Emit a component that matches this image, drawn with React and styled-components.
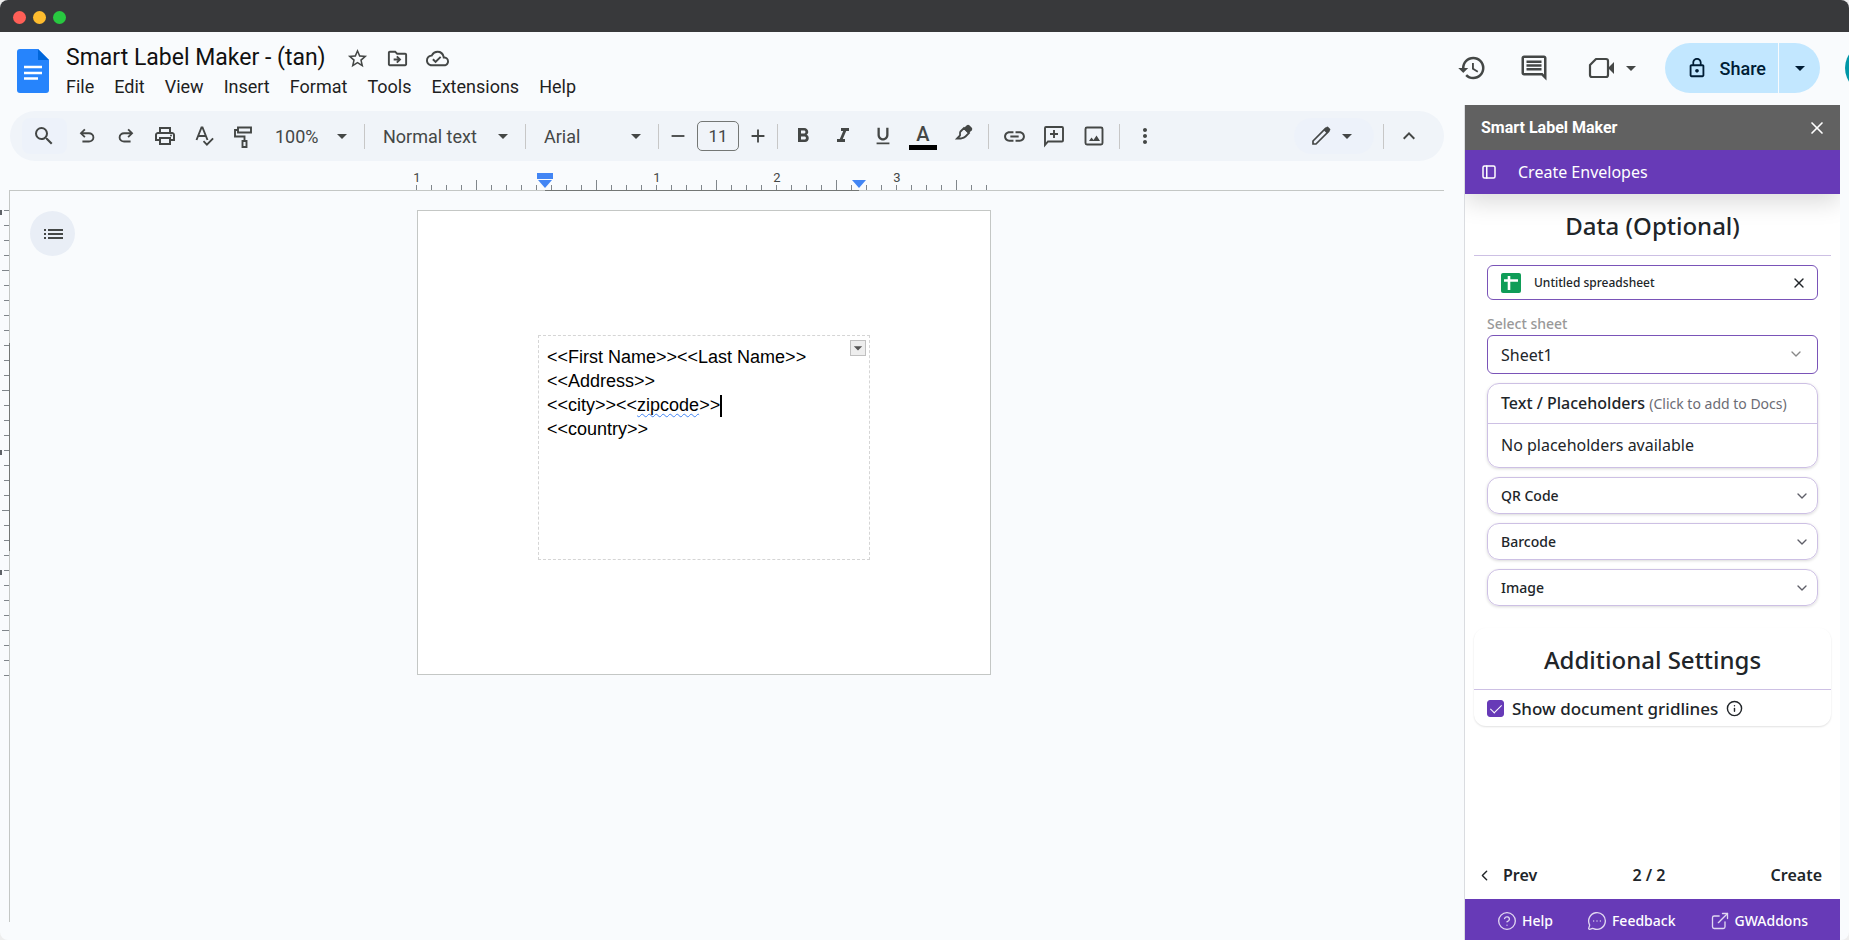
import styled, { createGlobalStyle } from 'styled-components';
import {
  MdSearch,
  MdStarBorder,
  MdOutlineDriveFileMove,
  MdOutlineCloudDone,
  MdHistory,
  MdOutlineInsertComment,
  MdLockOutline,
  MdOutlinePrint,
  MdArrowDropDown,
  MdRemove,
  MdAdd,
  MdFormatBold,
  MdFormatItalic,
  MdFormatUnderlined,
  MdLink,
  MdMoreVert,
  MdKeyboardArrowUp,
} from 'react-icons/md';
import { TbLayoutSidebar } from 'react-icons/tb';
import { ChevronDown, ChevronLeft, CircleHelp, ExternalLink, Info, MessageCircleMore, X } from 'lucide-react';

const MENUS = ['File', 'Edit', 'View', 'Insert', 'Format', 'Tools', 'Extensions', 'Help'];
const SECTIONS = ['QR Code', 'Barcode', 'Image'];
const TICK = 15;

const DocsLogo = () => (
  <svg width="32" height="44" viewBox="0 0 32 44" aria-hidden="true">
    <path d="M3 0h18l11 11v30a3 3 0 0 1-3 3H3a3 3 0 0 1-3-3V3a3 3 0 0 1 3-3z" fill="#2684fc" />
    <path d="M21 0l11 11H21z" fill="#0066da" />
    <path d="M7 18h18M7 24h18M7 29.500h14" stroke="#fff" strokeWidth="2.4" />
  </svg>
);

const MeetIcon = () => (
  <svg width="28" height="28" viewBox="0 0 28 28" fill="none" stroke="currentColor" strokeWidth="2.2" aria-hidden="true">
    <path d="M9 5h10a2 2 0 0 1 2 2v14a2 2 0 0 1-2 2H5a2 2 0 0 1-2-2V11z" strokeLinejoin="round" />
    <path d="M21 14l6-6v12z" fill="currentColor" stroke="none" />
  </svg>
);

const UndoIcon = () => (
  <svg width="22" height="22" viewBox="0 -960 960 960" fill="currentColor" aria-hidden="true">
    <path d="M280-200v-80h284q63 0 109.5-40T720-420q0-60-46.5-100T564-560H312l104 104-56 56-200-200 200-200 56 56-104 104h252q97 0 166.5 63T800-420q0 94-69.5 157T564-200H280Z" />
  </svg>
);

const RedoIcon = () => (
  <svg width="22" height="22" viewBox="0 -960 960 960" fill="currentColor" aria-hidden="true">
    <path d="M396-200q-97 0-166.5-63T160-420q0-94 69.5-157T396-640h252L544-744l56-56 200 200-200 200-56-56 104-104H396q-63 0-109.5 40T240-420q0 60 46.5 100T396-280h284v80H396Z" />
  </svg>
);

const SpellIcon = () => (
  <svg width="24" height="24" viewBox="0 0 24 24" fill="none" stroke="currentColor" strokeWidth="1.9" aria-hidden="true">
    <path d="M4.5 16L9.5 3.5h1L15.5 16M6.2 12h7.6" />
    <path d="M11.5 17.2l3.4 3.4 6.2-6.2" />
  </svg>
);

const PaintIcon = () => (
  <svg width="24" height="24" viewBox="0 0 24 24" fill="none" stroke="currentColor" strokeWidth="1.9" aria-hidden="true">
    <path d="M7 3.5h13v5H7zM7 6H4v6.5h9.5V17" />
    <path d="M11.5 17h4v6h-4z" />
  </svg>
);

const MarkerIcon = () => (
  <svg width="24" height="24" viewBox="0 0 24 24" fill="none" stroke="currentColor" strokeWidth="1.8" aria-hidden="true">
    <path d="M9.500 7.500L13 4l5 5-3.500 3.500c-1.500 1.500-3 1.700-4.500 2H6l3-3c.3-1.500-.500-3 .5-4z" />
    <path d="M12.500 4.500L15.800 1.200a2 2 0 0 1 2.500 0L20.800 3.700a2 2 0 0 1 0 2.500L17.500 9.500z" fill="currentColor" stroke="none" />
  </svg>
);

const AddCommentIcon = () => (
  <svg width="24" height="24" viewBox="0 0 24 24" fill="none" stroke="currentColor" strokeWidth="1.9" aria-hidden="true">
    <path d="M3 21V4a1 1 0 0 1 1-1h16a1 1 0 0 1 1 1v12.500a1 1 0 0 1-1 1H6z" />
    <path d="M12 6v8M8 10h8" />
  </svg>
);

const ImageIcon = () => (
  <svg width="24" height="24" viewBox="0 0 24 24" fill="none" stroke="currentColor" strokeWidth="1.9" aria-hidden="true">
    <rect x="3.500" y="3.500" width="17" height="17" rx="1.500" />
    <path d="M7 17l2.500-3.500 2 2.500 3-4.500L18 17z" fill="currentColor" stroke="none" />
  </svg>
);

const PencilIcon = () => (
  <svg width="24" height="24" viewBox="0 0 24 24" fill="none" stroke="currentColor" strokeWidth="1.7" aria-hidden="true">
    <path d="M4 20v-3L16.500 4.500l3 3L7 20z" />
    <path d="M14.500 6l3-3a1.200 1.200 0 0 1 1.700 0l1.800 1.800a1.200 1.200 0 0 1 0 1.700l-3 3z" fill="currentColor" stroke="none" />
  </svg>
);

const ListIcon = () => (
  <svg width="20" height="12" viewBox="0 0 20 12" stroke="currentColor" strokeWidth="2" aria-hidden="true">
    <path d="M5 2h15M5 6h15M5 10h15M1 2h2M1 6h2M1 10h2" />
  </svg>
);

const SheetsIcon = () => (
  <svg width="20" height="20" viewBox="0 0 20 20" aria-hidden="true">
    <rect width="20" height="20" rx="2" fill="#0f9d58" />
    <path d="M3 7.500h14M8 3v14" stroke="#fff" strokeWidth="2.600" />
  </svg>
);

const App = () => {
  return (
    <>
      <GlobalStyle />
      <Window>
        <TitleBar>
          <Light $color="#ff5f57" />
          <Light $color="#febc2e" />
          <Light $color="#28c840" />
        </TitleBar>

        <Header>
          <DocsLogo />
          <DocInfo>
            <DocTitleRow>
              <DocTitle>Smart Label Maker - (tan)</DocTitle>
              <TitleIcon aria-label="Star"><MdStarBorder size={23} /></TitleIcon>
              <TitleIcon aria-label="Move"><MdOutlineDriveFileMove size={23} /></TitleIcon>
              <TitleIcon aria-label="Saved to Drive"><MdOutlineCloudDone size={23} /></TitleIcon>
            </DocTitleRow>
            <MenuBar>
              {MENUS.map((name) => (
                <MenuItem key={name}>{name}</MenuItem>
              ))}
            </MenuBar>
          </DocInfo>
          <HeaderActions>
            <HeaderIcon aria-label="Version history"><MdHistory size={30} /></HeaderIcon>
            <HeaderIcon aria-label="Comments"><MdOutlineInsertComment size={30} /></HeaderIcon>
            <HeaderIcon $wide aria-label="Meet"><MeetIcon /><MdArrowDropDown size={24} /></HeaderIcon>
            <ShareGroup>
              <ShareButton><MdLockOutline size={22} />Share</ShareButton>
              <ShareMore aria-label="Share options"><MdArrowDropDown size={24} /></ShareMore>
            </ShareGroup>
            <Avatar aria-label="Account" />
          </HeaderActions>
        </Header>

        <Body>
          <Main>
            <Toolbar>
              <SearchButton aria-label="Search menus"><MdSearch size={24} /></SearchButton>
              <ToolButton aria-label="Undo"><UndoIcon /></ToolButton>
              <ToolButton aria-label="Redo"><RedoIcon /></ToolButton>
              <ToolButton aria-label="Print"><MdOutlinePrint size={24} /></ToolButton>
              <ToolButton aria-label="Spelling"><SpellIcon /></ToolButton>
              <ToolButton aria-label="Paint format"><PaintIcon /></ToolButton>
              <ToolSelect width={97} label="Zoom" value="100%" />
              <Separator />
              <ToolSelect width={150} label="Styles" value="Normal text" />
              <Separator />
              <ToolSelect width={122} label="Font" value="Arial" />
              <Separator />
              <Stepper>
                <StepButton aria-label="Decrease font size"><MdRemove size={22} /></StepButton>
                <SizeInput aria-label="Font size" defaultValue="11" />
                <StepButton aria-label="Increase font size"><MdAdd size={22} /></StepButton>
              </Stepper>
              <Separator />
              <ToolButton $roomy aria-label="Bold"><MdFormatBold size={24} /></ToolButton>
              <ToolButton $roomy aria-label="Italic"><MdFormatItalic size={24} /></ToolButton>
              <ToolButton $roomy aria-label="Underline"><MdFormatUnderlined size={22} /></ToolButton>
              <ToolButton $roomy aria-label="Text color"><ColorLetter>A</ColorLetter></ToolButton>
              <ToolButton $roomy aria-label="Highlight color"><MarkerIcon /></ToolButton>
              <Separator />
              <ToolButton $roomy aria-label="Insert link"><MdLink size={25} /></ToolButton>
              <ToolButton $roomy aria-label="Add comment"><AddCommentIcon /></ToolButton>
              <ToolButton $roomy aria-label="Insert image"><ImageIcon /></ToolButton>
              <Separator />
              <ToolButton $roomy aria-label="More"><MdMoreVert size={24} /></ToolButton>
              <ModeButton aria-label="Editing mode"><PencilIcon /><MdArrowDropDown size={24} /></ModeButton>
              <Separator />
              <ToolButton $roomy aria-label="Hide the menus"><MdKeyboardArrowUp size={24} /></ToolButton>
            </Toolbar>

            <RulerRow>
              <Ruler>
                {Array.from({ length: 39 }, (_, i) => (
                  <Tick key={i} $long={i % 8 === 4}>
                    {i % 8 === 0 && i !== 8 && <TickLabel>{i === 0 ? 1 : i / 8 - 1}</TickLabel>}
                  </Tick>
                ))}
                <ActiveRange />
                <LeftMarker width="16" height="16" viewBox="0 0 16 16" aria-hidden="true">
                  <path d="M0 0h16v6H0zM1 7h14l-7 8z" fill="#4285f4" />
                </LeftMarker>
                <RightMarker width="16" height="16" viewBox="0 0 16 16" aria-hidden="true">
                  <path d="M1 7h14l-7 8z" fill="#4285f4" />
                </RightMarker>
              </Ruler>
            </RulerRow>

            <Workspace>
              <SideRuler>
                {Array.from({ length: 32 }, (_, i) => (
                  <SideTick key={i} $long={i % 8 === 4} $inch={i % 8 === 0 && i !== 8} />
                ))}
              </SideRuler>
              <SideLine />
              <OutlineButton aria-label="Show outline"><ListIcon /></OutlineButton>
              <Page>
                <Label>
                  <LabelText>
                    <p>&lt;&lt;First Name&gt;&gt;&lt;&lt;Last Name&gt;&gt;</p>
                    <p>&lt;&lt;Address&gt;&gt;</p>
                    <p>
                      &lt;&lt;city&gt;&gt;&lt;&lt;<Misspelled>zipcode</Misspelled>&gt;&gt;<Caret />
                    </p>
                    <p>&lt;&lt;country&gt;&gt;</p>
                  </LabelText>
                  <CellMenu aria-label="Table options"><MdArrowDropDown size={20} /></CellMenu>
                </Label>
              </Page>
            </Workspace>
          </Main>

          <Sidebar>
            <SidebarHeader>
              <strong>Smart Label Maker</strong>
              <PlainButton aria-label="Close"><X size={20} strokeWidth={2} /></PlainButton>
            </SidebarHeader>
            <SidebarTitle>
              <TbLayoutSidebar size={18} />
              Create Envelopes
            </SidebarTitle>
            <SidebarContent>
              <Panel>
                <PanelTitle>Data (Optional)</PanelTitle>
                <PanelBody>
                  <FileBox>
                    <SheetsIcon />
                    <FileName>Untitled spreadsheet</FileName>
                    <PlainButton aria-label="Remove spreadsheet"><X size={16} strokeWidth={2} /></PlainButton>
                  </FileBox>
                  <FieldLabel htmlFor="sheet">Select sheet</FieldLabel>
                  <SelectWrap>
                    <SheetSelect id="sheet" defaultValue="Sheet1">
                      <option>Sheet1</option>
                    </SheetSelect>
                    <ChevronDown size={16} />
                  </SelectWrap>
                  <Card>
                    <CardHead>Text / Placeholders <small>(Click to add to Docs)</small></CardHead>
                    <CardBody>No placeholders available</CardBody>
                  </Card>
                  {SECTIONS.map((name) => (
                    <SectionButton key={name}>
                      {name}
                      <ChevronDown size={16} color="#5f5f68" />
                    </SectionButton>
                  ))}
                </PanelBody>
              </Panel>
              <Panel $raised>
                <PanelTitle>Additional Settings</PanelTitle>
                <SettingRow>
                  <Checkbox id="gridlines" type="checkbox" defaultChecked />
                  <label htmlFor="gridlines">Show document gridlines</label>
                  <Info size={17} strokeWidth={2} />
                </SettingRow>
              </Panel>
            </SidebarContent>
            <Pager>
              <PagerButton><ChevronLeft size={17} />Prev</PagerButton>
              <span>2 / 2</span>
              <PagerButton>Create</PagerButton>
            </Pager>
            <SidebarFooter>
              <a href="#help"><CircleHelp size={20} strokeWidth={1.6} color="#e1d8f1" />Help</a>
              <a href="#feedback"><MessageCircleMore size={20} strokeWidth={1.6} color="#e1d8f1" />Feedback</a>
              <a href="#gwaddons"><ExternalLink size={20} strokeWidth={1.6} color="#e1d8f1" />GWAddons</a>
            </SidebarFooter>
          </Sidebar>
        </Body>
      </Window>
    </>
  );
};

const ToolSelect = ({ width, label, value }) => (
  <ToolSelectWrap $width={width}>
    <select aria-label={label} defaultValue={value}>
      <option>{value}</option>
    </select>
    <MdArrowDropDown size={24} />
  </ToolSelectWrap>
);

const GlobalStyle = createGlobalStyle`
  * {
    box-sizing: border-box;
  }
  body {
    margin: 0;
    background: #eeeeee;
    font-family: Roboto, "Open Sans", sans-serif;
  }
  p, h2 {
    margin: 0;
  }
  button, input, select {
    margin: 0;
    padding: 0;
    border: 0;
    background: none;
    color: inherit;
    font: inherit;
  }
  svg {
    flex-shrink: 0;
  }
`;

const Window = styled.div`
  display: flex;
  flex-direction: column;
  min-height: 100vh;
  overflow: hidden;
  border-radius: 8px;
  background: #f9fbfd;
`;

const TitleBar = styled.div`
  display: flex;
  align-items: center;
  gap: 7px;
  height: 32px;
  padding: 2px 13px 0;
  background: #38393b;
`;

const Light = styled.span`
  width: 13px;
  height: 13px;
  border-radius: 50%;
  background: ${(props) => props.$color};
`;

const Header = styled.header`
  display: flex;
  height: 73px;
  padding: 11px 0 0 17px;
  overflow: hidden;

  > svg {
    margin-top: 6px;
  }
`;

const DocInfo = styled.div`
  flex: 1;
  padding-left: 17px;
`;

const DocTitleRow = styled.div`
  display: flex;
  align-items: center;
  height: 30px;
`;

const DocTitle = styled.span`
  margin-right: 12px;
  font-size: 23px;
  line-height: 30px;
  color: #111111;
`;

const TitleIcon = styled.button`
  display: flex;
  justify-content: center;
  width: 40px;
  color: #444746;
`;

const MenuBar = styled.nav`
  display: flex;
  gap: 20px;
  height: 28px;
`;

const MenuItem = styled.button`
  font-size: 18px;
  line-height: 28px;
  color: #1f1f1f;
`;

const HeaderActions = styled.div`
  display: flex;
  align-items: center;
  height: 50px;
  margin-right: -46px;
`;

const HeaderIcon = styled.button`
  display: flex;
  align-items: center;
  justify-content: center;
  gap: 4px;
  width: ${(props) => (props.$wide ? '100px' : '62px')};
  color: #444746;
`;

const ShareGroup = styled.div`
  display: flex;
  gap: 1px;
  height: 50px;
  overflow: hidden;
  border-radius: 25px;
  color: #001d35;
`;

const ShareButton = styled.button`
  display: flex;
  align-items: center;
  gap: 12px;
  padding: 0 12px 0 21px;
  background: #c2e7ff;
  font-size: 18px;
  font-weight: 500;
`;

const ShareMore = styled.button`
  display: flex;
  align-items: center;
  justify-content: center;
  width: 41px;
  background: #c2e7ff;
`;

const Avatar = styled.button`
  width: 50px;
  height: 50px;
  margin-left: 25px;
  border-radius: 50%;
  background: #0097a7;
`;

const Body = styled.div`
  display: flex;
  flex: 1;
  gap: 20px;
  padding-right: 9px;
`;

const Main = styled.main`
  display: flex;
  flex: 1;
  flex-direction: column;
  min-width: 0;
`;

const Toolbar = styled.div`
  display: flex;
  align-items: center;
  height: 50px;
  margin: 6px 0 0 10px;
  padding: 0 15px 0 12px;
  border-radius: 25px;
  background: #f0f4f9;
  color: #444746;
`;

const ToolButton = styled.button`
  display: flex;
  align-items: center;
  justify-content: center;
  flex-shrink: 0;
  width: ${(props) => (props.$roomy ? '40px' : '39px')};
  height: 36px;
`;

const SearchButton = styled(ToolButton)`
  width: 45px;
  padding-right: 2px;
  border-radius: 8px;
  background: #edf2fa;
`;

const ToolSelectWrap = styled.div`
  position: relative;
  flex-shrink: 0;
  width: ${(props) => props.$width}px;
  height: 36px;

  select {
    width: 100%;
    height: 36px;
    padding: 0 28px 0 13px;
    appearance: none;
    font-size: 18px;
  }

  svg {
    position: absolute;
    top: 6px;
    right: 5px;
    pointer-events: none;
  }
`;

const Separator = styled.span`
  flex-shrink: 0;
  width: 1px;
  height: 25px;
  margin: 0 5px;
  background: #c7c7c7;
`;

const Stepper = styled.div`
  display: flex;
  align-items: center;
  gap: 5px;
`;

const StepButton = styled.button`
  display: flex;
  justify-content: center;
  width: 28px;
`;

const SizeInput = styled.input`
  width: 42px;
  height: 30px;
  border: 1px solid #747775;
  border-radius: 5px;
  font-size: 17px;
  text-align: center;
`;

const ColorLetter = styled.span`
  width: 28px;
  height: 27px;
  border-bottom: 5px solid #000000;
  font-size: 20px;
  font-weight: 500;
  line-height: 22px;
`;

const ModeButton = styled.button`
  display: flex;
  align-items: center;
  justify-content: center;
  gap: 2px;
  width: 80px;
  height: 36px;
  margin: 0 4px 0 auto;
  border-radius: 18px;
  background: #edf2fa;
`;

/* the ruler and the workspace share columns, so the page sits under its inches */
const RulerRow = styled.div`
  display: grid;
  grid-template-columns: 65px 1fr 112px;
  justify-items: center;
  margin-left: 9px;
  border-bottom: 1px solid #c4c7c5;
`;

const Ruler = styled.div`
  position: relative;
  display: flex;
  align-items: flex-end;
  grid-column: 2;
  width: 574px;
  height: 29px;
`;

const Tick = styled.span`
  display: flex;
  flex: 0 0 ${TICK}px;
  height: ${(props) => (props.$long ? '10px' : '5px')};
  border-left: 1px solid #80868b;
`;

const TickLabel = styled.span`
  width: 0;
  display: flex;
  justify-content: center;
  align-self: flex-end;
  margin-bottom: 4px;
  font-size: 13px;
  line-height: 16px;
  color: #444746;
`;

const ActiveRange = styled.span`
  position: absolute;
  bottom: -1px;
  left: 129px;
  width: 314px;
  height: 1px;
  background: #747775;
`;

const LeftMarker = styled.svg`
  position: absolute;
  bottom: 1px;
  left: 121px;
`;

const RightMarker = styled.svg`
  position: absolute;
  bottom: 1px;
  left: 435px;
`;

const Workspace = styled.div`
  display: grid;
  flex: 1;
  grid-template-columns: 9px 1px 66px 1fr 112px;
  align-items: start;
`;

const SideRuler = styled.div`
  display: flex;
  flex-direction: column;
  padding-top: 19px;
`;

/* whole inches carry a short bar on the window's edge */
const SideTick = styled.span`
  display: flex;
  justify-content: flex-end;
  height: ${TICK}px;

  &::before {
    content: "";
    width: 2px;
    height: ${(props) => (props.$inch ? '5px' : '0')};
    margin-right: auto;
    background: #5f6368;
  }

  &::after {
    content: "";
    width: ${(props) => (props.$long ? '9px' : '5px')};
    height: 1px;
    background: #80868b;
  }
`;

const SideLine = styled.div`
  align-self: stretch;
  margin-bottom: 18px;
  background: linear-gradient(#c4c7c5 152px, #747775 152px, #747775 360px, #c4c7c5 360px);
`;

const OutlineButton = styled.button`
  display: flex;
  align-items: center;
  justify-content: center;
  width: 45px;
  height: 45px;
  margin: 20px 0 0 20px;
  border-radius: 50%;
  background: #e9eef6;
  color: #444746;
`;

const Page = styled.section`
  justify-self: center;
  width: 574px;
  height: 465px;
  margin-top: 19px;
  padding: 124px 120px 0 120px;
  border: 1px solid #c4c7c5;
  background: #ffffff;
`;

const Label = styled.div`
  display: flex;
  align-items: flex-start;
  justify-content: space-between;
  height: 225px;
  padding: 4px 3px 0 8px;
  border: 1px dashed #d5d5d5;
`;

const LabelText = styled.div`
  padding-top: 5px;
  font-family: "Liberation Sans", Arial, sans-serif;
  font-size: 18px;
  line-height: 24px;
  color: #000000;
  white-space: nowrap;
`;

const Misspelled = styled.span`
  text-decoration: underline wavy #4285f4 1px;
  text-decoration-skip-ink: none;
  text-underline-offset: 2px;
`;

const Caret = styled.span`
  display: inline-block;
  width: 2px;
  height: 22px;
  vertical-align: middle;
  margin: -4px 0;
  background: #000000;
`;

const CellMenu = styled.button`
  display: flex;
  align-items: center;
  justify-content: center;
  width: 16px;
  height: 16px;
  border: 1px solid #c0c0c0;
  background: #eeeeee;
  color: #555555;
`;

const Sidebar = styled.aside`
  display: flex;
  flex-direction: column;
  width: 376px;
  border-left: 1px solid #dadce0;
  background: #ffffff;
  font-family: "Noto Sans", "Open Sans", sans-serif;
  color: #212529;
`;

const SidebarHeader = styled.div`
  display: flex;
  align-items: center;
  justify-content: space-between;
  height: 45px;
  padding: 0 13px 0 16px;
  background: #616161;
  font-family: Roboto, sans-serif;
  font-size: 16px;
  color: #ffffff;
`;

const PlainButton = styled.button`
  display: flex;
`;

const SidebarTitle = styled.div`
  display: flex;
  align-items: center;
  gap: 20px;
  height: 44px;
  padding: 0 15px;
  background: #673ab7;
  box-shadow: 0 8px 24px rgba(0, 0, 0, 0.15);
  font-size: 16px;
  color: #ffffff;
  clip-path: inset(0 0 -48px 0);
`;

const SidebarContent = styled.div`
  flex: 1;
  padding: 0 9px;
`;

const Panel = styled.section`
  margin-bottom: 22px;
  border-radius: 12px;
  box-shadow: ${(props) => (props.$raised ? '0 1px 2px rgba(0, 0, 0, 0.12)' : 'none')};
`;

const PanelTitle = styled.h2`
  height: 62px;
  padding-top: 13px;
  border-bottom: 1px solid #cdc0e4;
  font-size: 24px;
  font-weight: 500;
  line-height: 38px;
  text-align: center;
`;

const PanelBody = styled.div`
  display: flex;
  flex-direction: column;
  padding: 9px 13px 0;
`;

const FileBox = styled.div`
  display: flex;
  align-items: center;
  gap: 13px;
  height: 35px;
  padding: 0 10px 0 13px;
  border: 1px solid #7a54b8;
  border-radius: 6px;
`;

const FileName = styled.span`
  flex: 1;
  font-size: 12px;
  font-weight: 500;
`;

const FieldLabel = styled.label`
  margin-top: 13px;
  font-size: 14px;
  font-weight: 500;
  line-height: 22px;
  color: #999999;
`;

const SelectWrap = styled.div`
  position: relative;

  svg {
    position: absolute;
    top: 11px;
    right: 14px;
    color: #888888;
    pointer-events: none;
  }
`;

const SheetSelect = styled.select`
  width: 100%;
  height: 39px;
  padding: 0 13px;
  border: 1px solid #7a54b8;
  border-radius: 6px;
  appearance: none;
  font-size: 16px;
`;

const Card = styled.div`
  margin-top: 9px;
  border: 1px solid #cdc0e4;
  border-radius: 12px;
  box-shadow: 0 1px 3px rgba(0, 0, 0, 0.15);
`;

const CardHead = styled.div`
  padding: 0 13px;
  border-bottom: 1px solid #cdc0e4;
  font-size: 16px;
  font-weight: 500;
  line-height: 39px;

  small {
    font-size: 14px;
    font-weight: 400;
    color: #6c6c74;
  }
`;

const CardBody = styled.div`
  padding: 0 13px;
  font-size: 16px;
  line-height: 43px;
`;

const SectionButton = styled.button`
  display: flex;
  align-items: center;
  justify-content: space-between;
  height: 37px;
  margin-top: 9px;
  padding: 0 7px 0 13px;
  border: 1px solid #cdc0e4;
  border-radius: 12px;
  box-shadow: 0 1px 3px rgba(0, 0, 0, 0.15);
  font-size: 14px;
  font-weight: 500;
`;

const SettingRow = styled.div`
  display: flex;
  align-items: center;
  gap: 8px;
  height: 36px;
  padding: 0 13px;
  font-size: 17px;
  font-weight: 500;
`;

const Checkbox = styled.input`
  display: flex;
  justify-content: center;
  width: 17px;
  height: 17px;
  appearance: none;
  border: 1px solid #673ab7;
  border-radius: 3px;

  &:checked {
    background: #673ab7;
  }

  &:checked::after {
    content: "";
    width: 5px;
    height: 10px;
    margin-top: 1px;
    border: solid #ffffff;
    border-width: 0 1px 1px 0;
    transform: rotate(45deg);
  }
`;

const Pager = styled.div`
  display: grid;
  grid-template-columns: 1fr auto 1fr;
  align-items: center;
  height: 48px;
  padding: 0 18px 0 11px;
  font-size: 16px;
  font-weight: 600;
`;

const PagerButton = styled.button`
  display: flex;
  align-items: center;
  gap: 10px;

  &:last-child {
    justify-self: end;
  }
`;

const SidebarFooter = styled.footer`
  display: flex;
  align-items: center;
  justify-content: space-between;
  height: 41px;
  padding: 2px 32px 0;
  background: #673ab7;

  a {
    display: flex;
    align-items: center;
    gap: 5px;
    font-size: 14px;
    font-weight: 500;
    color: #ffffff;
    text-decoration: none;
  }
`;

export default App;
